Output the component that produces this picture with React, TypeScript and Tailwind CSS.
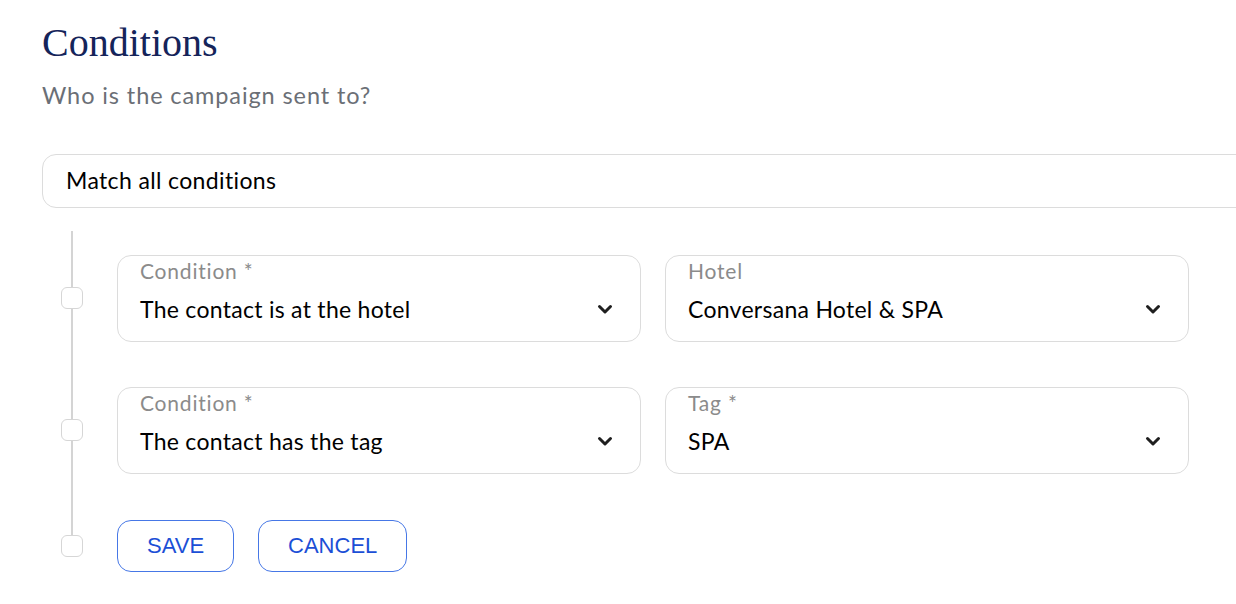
const Chevron = () => (
  <svg width="16" height="11" viewBox="0 0 16 11" fill="none" className="shrink-0 text-[#1f1f1f]">
    <path d="M2.5 2.5l5.5 5.5 5.5-5.5" stroke="currentColor" strokeWidth="3" strokeLinecap="round" strokeLinejoin="round" />
  </svg>
);

type FieldProps = {
  label: string;
  value: string;
};

const SelectField = ({ label, value }: FieldProps) => (
  <div className="h-[87px] rounded-[14px] border border-[#dcdcdc] bg-white pl-[22px] pr-[27px] pt-[4px]">
    <div className="text-[21px] leading-[21px] tracking-[0.8px] text-[#8b8b8b]">{label}</div>
    <div className="mt-[17px] flex items-center justify-between">
      <span className="text-[23px] leading-[23px] tracking-[0.28px] text-black">{value}</span>
      <Chevron />
    </div>
  </div>
);

const Node = () => (
  <div className="relative z-10 h-[22px] w-[22px] shrink-0 rounded-[6px] border border-[#d6d6d6] bg-white" />
);

const rows = [
  [
    { label: "Condition *", value: "The contact is at the hotel" },
    { label: "Hotel", value: "Conversana Hotel & SPA" }
  ],
  [
    { label: "Condition *", value: "The contact has the tag" },
    { label: "Tag *", value: "SPA" }
  ]
];

export default function App() {
  return (
    <div className="h-[604px] w-[1236px] overflow-hidden bg-white font-['Lato',sans-serif]">
      <div className="pl-[42px] pt-[23px]">
        <h1 className="font-['Liberation_Serif',serif] text-[40px] leading-[40px] text-[#15245a]">Conditions</h1>
        <p className="mt-[21px] text-[23.5px] leading-[23.5px] tracking-[0.9px] text-[#6b6f76]">
          Who is the campaign sent to?
        </p>

        <div className="mt-[46px] flex h-[54px] w-[1260px] items-center rounded-[14px] border border-[#dcdcdc] pl-[23px] text-[23px] tracking-[0.37px] text-black">
          Match all conditions
        </div>

        <div className="relative ml-[19px] mt-[23px] flex flex-col gap-[45px] pt-[24px]">
          <div className="absolute bottom-[32px] left-[10px] top-0 w-[2px] bg-[#d4d4d4]" />

          {rows.map((row, i) => (
            <div key={i} className="flex items-center gap-[34px]">
              <Node />
              <div className="grid w-[1072px] grid-cols-2 gap-[24px]">
                {row.map((field) => (
                  <SelectField key={field.label + field.value} label={field.label} value={field.value} />
                ))}
              </div>
            </div>
          ))}

          <div className="mt-[1px] flex items-center gap-[34px]">
            <Node />
            <div className="flex gap-[24px] font-['Liberation_Sans',Arial,sans-serif]">
              <button
                type="button"
                className="h-[52px] rounded-[14px] border border-[#4677e6] px-[29px] text-[22px] text-[#1c4fd6]"
              >
                SAVE
              </button>
              <button
                type="button"
                className="h-[52px] rounded-[14px] border border-[#4677e6] px-[29px] text-[22px] text-[#1c4fd6]"
              >
                CANCEL
              </button>
            </div>
          </div>
        </div>
      </div>
    </div>
  );
}
